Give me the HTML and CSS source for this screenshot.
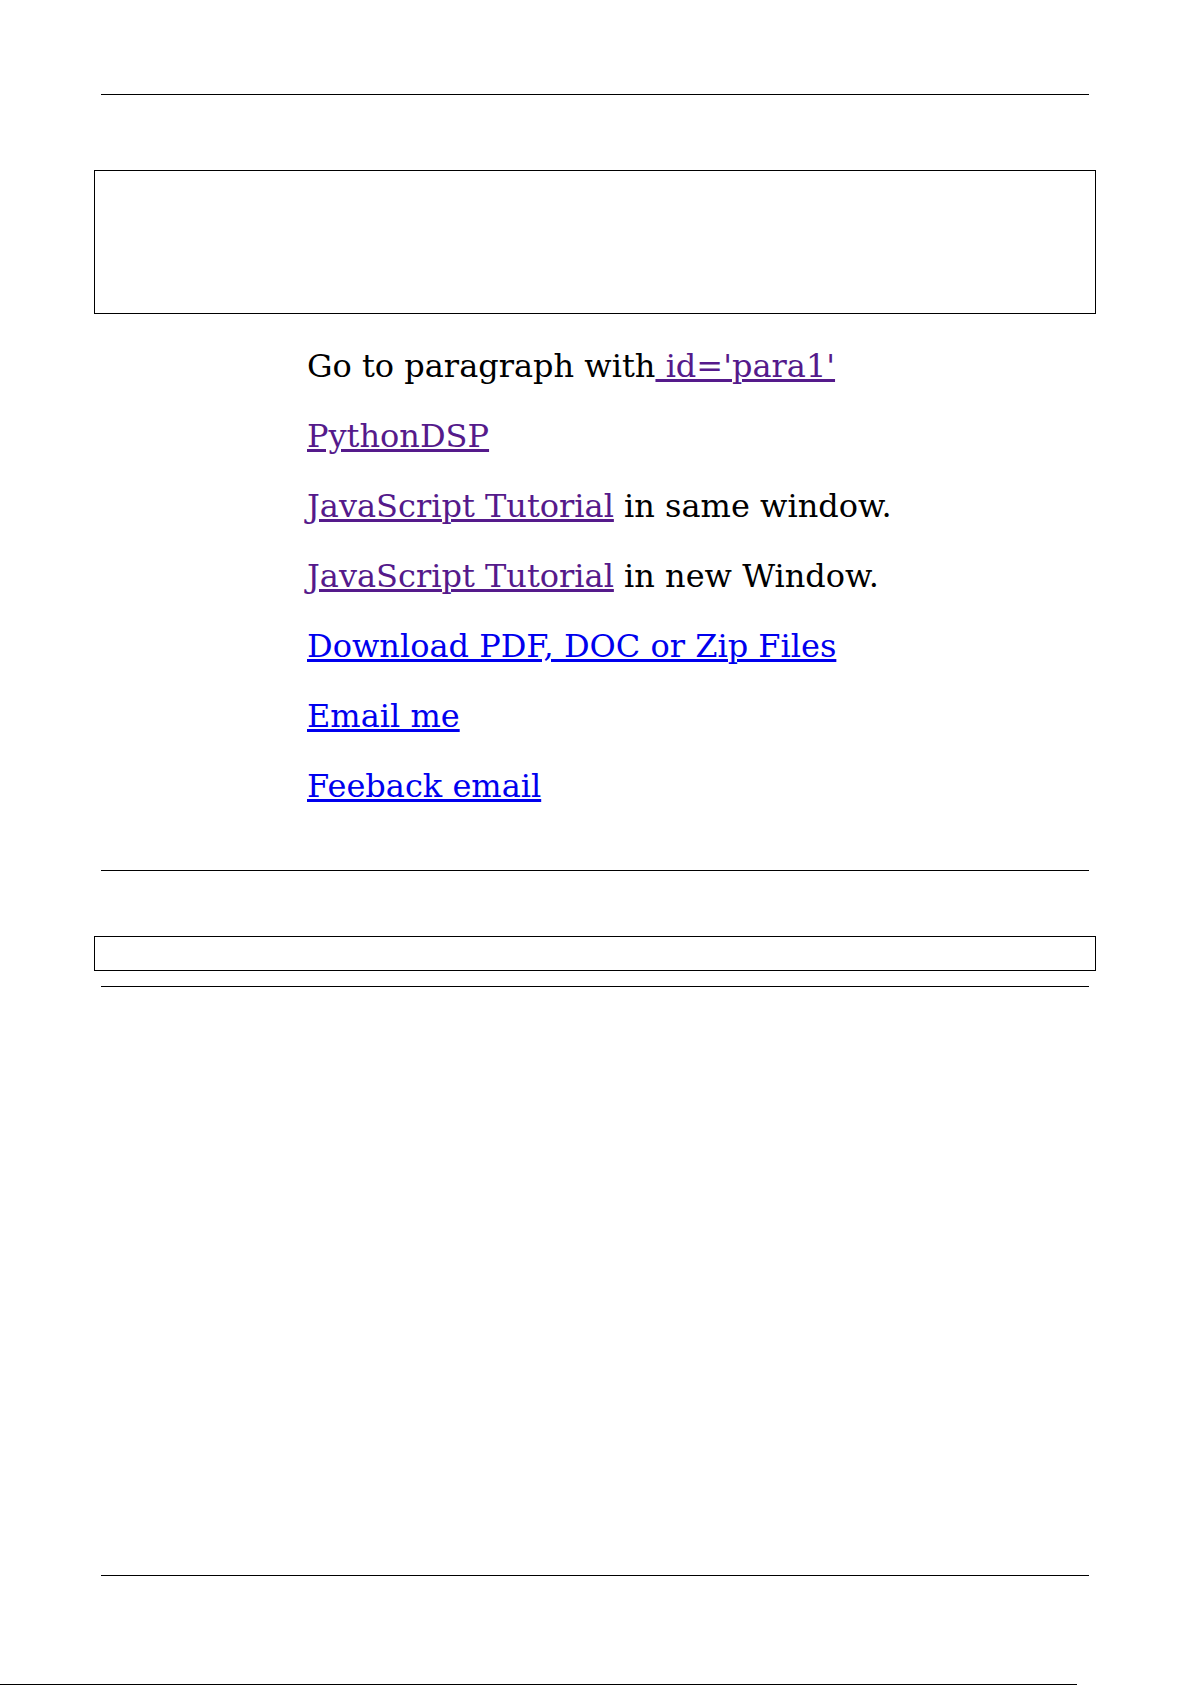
FILE: index.html
```html
<!DOCTYPE html>
<html>
<head>
<meta charset="utf-8">
<link rel="stylesheet" href="styles.css">
<title>Links</title>
</head>
<body>
<div class="rule rule-top"></div>
<div class="box box-large"></div>
<div class="links">
  <p class="line">Go to paragraph with<a class="visited" href="#para1"> id='para1'</a></p>
  <p class="line"><a class="visited" href="#">PythonDSP</a></p>
  <p class="line"><a class="visited" href="#">JavaScript Tutorial</a> in same window.</p>
  <p class="line"><a class="visited" href="#">JavaScript Tutorial</a> in new Window.</p>
  <p class="line"><a class="fresh" href="#">Download PDF, DOC or Zip Files</a></p>
  <p class="line"><a class="fresh" href="#">Email me</a></p>
  <p class="line"><a class="fresh" href="#">Feeback email</a></p>
</div>
<div class="rule rule-mid"></div>
<div class="box box-small"></div>
<div class="rule rule-after"></div>
<div class="rule rule-bottom"></div>
<div class="edge"></div>
</body>
</html>
```
FILE: styles.css
```css
html, body {
  margin: 0;
  padding: 0;
  background: #fff;
}
body {
  font-family: "DejaVu Serif", serif;
  color: #000;
  width: 1192px;
  overflow: hidden;
}
.rule {
  margin-left: 101px;
  width: 988px;
  height: 0;
  border-top: 1px solid #000;
}
.rule-top { margin-top: 94px; }
.rule-mid { margin-top: 67px; }
.rule-after { margin-top: 15px; }
.rule-bottom { margin-top: 588px; }
.box {
  margin-left: 94px;
  width: 1000px;
  border: 1px solid #000;
}
.box-large {
  margin-top: 75px;
  height: 142px;
}
.box-small {
  margin-top: 65px;
  height: 33px;
}
.links {
  margin-top: 35px;
  padding-left: 307px;
}
.line {
  margin: 0 0 36px 0;
  font-size: 32px;
  line-height: 34px;
  height: 34px;
  white-space: nowrap;
}
.line:last-child { margin-bottom: 0; }
.visited { color: #551a8b; }
.fresh { color: #0000ee; }
.edge {
  margin-top: 108px;
  width: 1077px;
  height: 0;
  border-top: 1px solid #000;
}
```
